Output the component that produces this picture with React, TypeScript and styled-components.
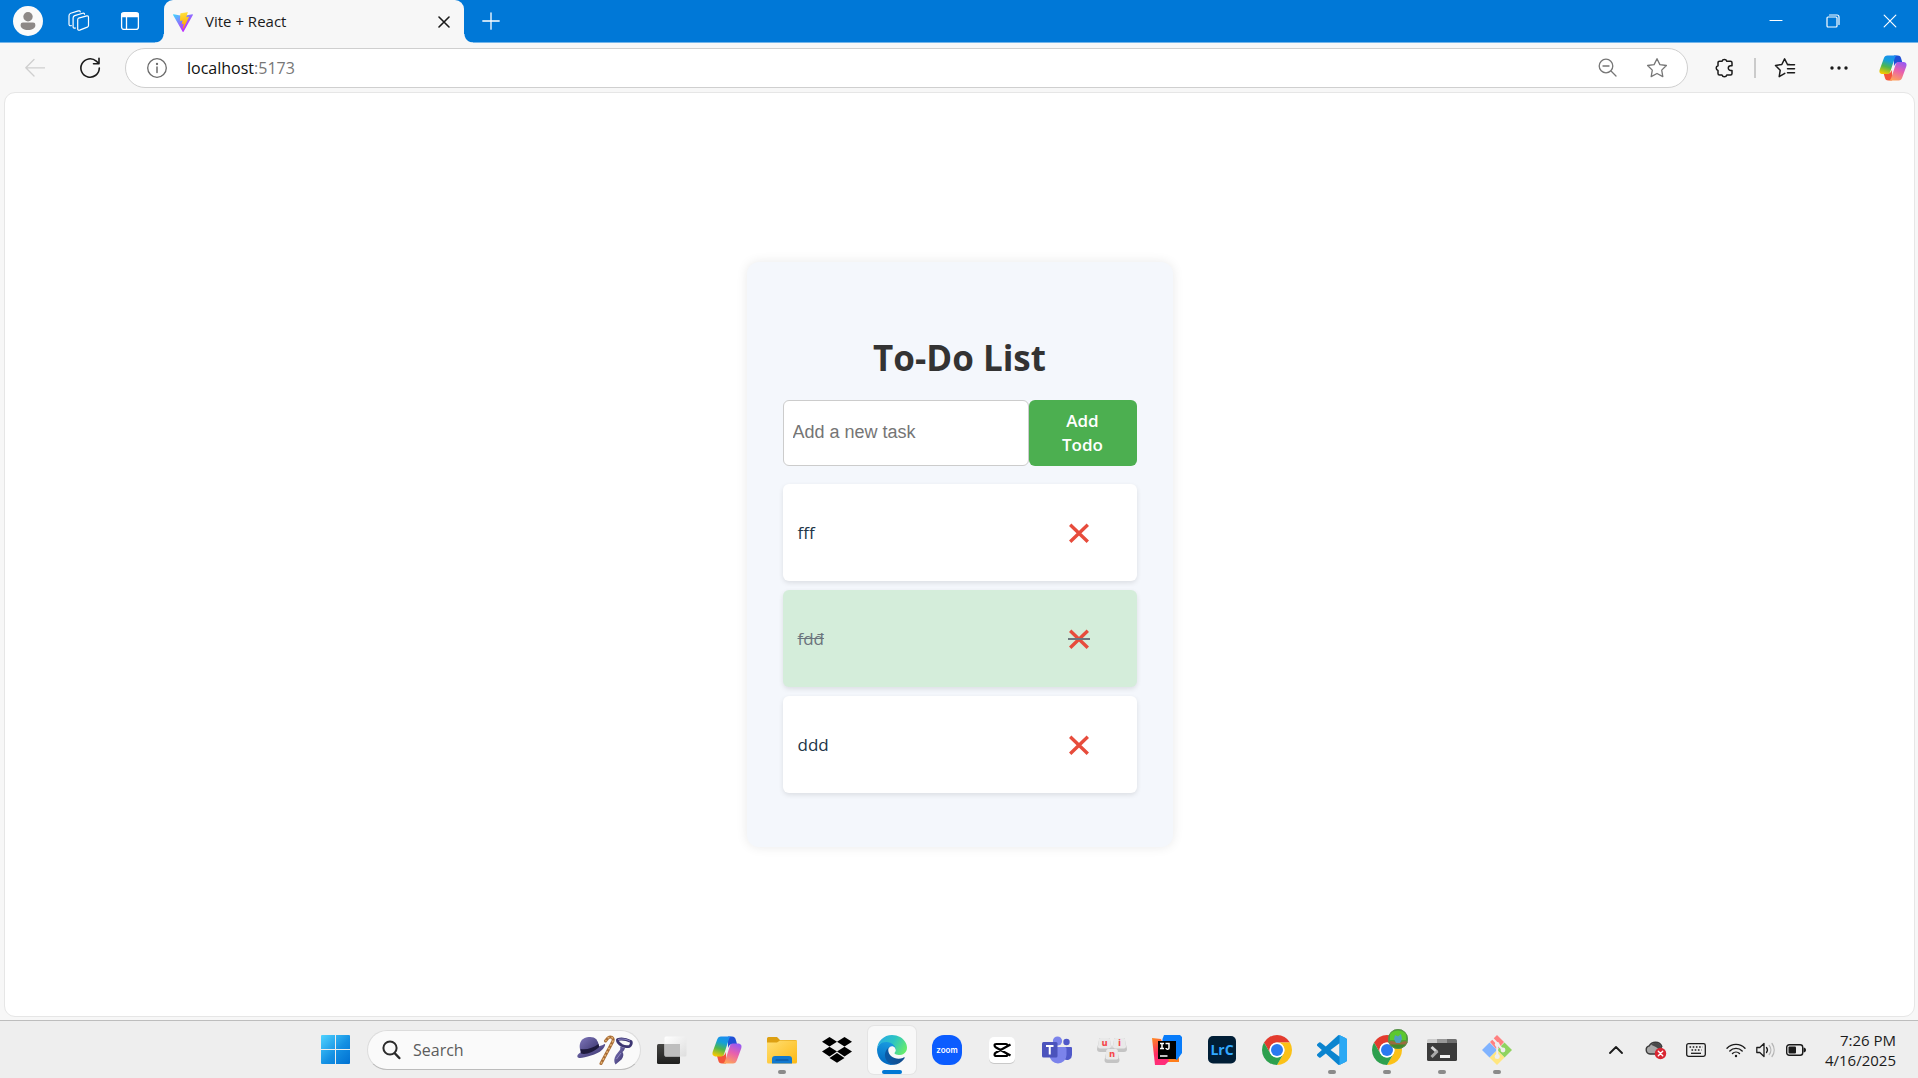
import React, { useState } from "react";
import styled, { createGlobalStyle } from "styled-components";

const ui = `"Segoe UI", "Open Sans", "Noto Sans", sans-serif`;

const GlobalStyle = createGlobalStyle`
  * { box-sizing: border-box; }
  body { margin: 0; font-family: ${ui}; background: #f7f7f7; }
  button { border: 0; padding: 0; background: none; font-family: inherit; cursor: pointer; }
  input { font-family: inherit; }
  svg { display: block; flex: none; }
`;

const Screen = styled.div`
  min-height: 100vh;
  display: flex;
  flex-direction: column;
`;

/* ---------- Title bar ---------- */

const TitleBar = styled.header`
  height: 43px;
  display: flex;
  background: #0078d7;
  border-bottom: 1px solid #73b5ea;
`;

const TitleTools = styled.div`
  display: flex;
  align-items: center;
  gap: 21px;
  padding: 0 19px 0 13px;
`;

const TitleButton = styled.button<{ $width?: number }>`
  width: ${(p) => p.$width ?? 30}px;
  height: 42px;
  display: grid;
  place-items: center;
  color: #fff;
`;

const Tab = styled.div`
  position: relative;
  width: 300px;
  height: 43px;
  display: flex;
  align-items: center;
  gap: 12px;
  padding: 0 10px 0 9px;
  border-radius: 9px 9px 0 0;
  background: #f7f7f7;
  font-size: 15px;
  color: #1b1b1b;

  &::before,
  &::after {
    content: "";
    position: absolute;
    bottom: 0;
    width: 9px;
    height: 9px;
  }
  &::before {
    left: -9px;
    background: radial-gradient(circle at 0 0, transparent 8px, #f7f7f7 9px);
  }
  &::after {
    right: -9px;
    background: radial-gradient(circle at 100% 0, transparent 8px, #f7f7f7 9px);
  }
`;

const TabTitle = styled.span`
  flex: 1;
  line-height: 20px;
  padding-bottom: 2px;
`;

const TabClose = styled.button`
  width: 20px;
  height: 20px;
  display: grid;
  place-items: center;
  color: #1b1b1b;
`;

const WindowControls = styled.div`
  display: flex;
  margin-left: auto;
`;

/* ---------- Toolbar ---------- */

const Toolbar = styled.nav`
  display: flex;
  align-items: center;
  height: 49px;
  padding: 0 10px 0 20px;
  color: #1b1b1b;
`;

const ToolButton = styled.button<{ $width?: number; $color?: string }>`
  width: ${(p) => p.$width ?? 30}px;
  height: 30px;
  display: grid;
  place-items: center;
  color: ${(p) => p.$color ?? "#1b1b1b"};
`;

const NavButtons = styled.div`
  display: flex;
  gap: 25px;
  padding-right: 20px;
`;

const AddressBar = styled.div`
  flex: 1;
  height: 40px;
  display: flex;
  align-items: center;
  border: 1px solid #cfcfcf;
  border-radius: 20px;
  background: #fff;
  padding: 0 15px 0 16px;
`;

const AddressText = styled.label`
  flex: 1;
  display: flex;
  align-items: center;
  padding-left: 15px;
  font-size: 16px;
  line-height: 24px;
  color: #777;
`;

const AddressInput = styled.input`
  field-sizing: content;
  border: 0;
  padding: 0;
  outline: 0;
  background: none;
  font-size: 16px;
  line-height: 24px;
  color: #111;
`;

const AddressTools = styled.div`
  display: flex;
  gap: 20px;
`;

const ToolbarTools = styled.div`
  display: flex;
  align-items: center;
  padding-left: 22px;
`;

const Divider = styled.span`
  width: 2px;
  height: 20px;
  margin: 0 14px;
  background: #cbcbcb;
`;

const DotsSlot = styled.div`
  display: flex;
  gap: 24px;
  margin-left: 24px;
`;

/* ---------- Page ---------- */

const PageFrame = styled.main`
  flex: 1;
  display: flex;
  align-items: center;
  justify-content: center;
  margin: 0 3px 3px 4px;
  border: 1px solid #e6e6e6;
  border-radius: 11px;
  background: #fff;
`;

const Card = styled.section`
  width: 426px;
  padding: 76px 36px 54px;
  border-radius: 12px;
  background: #f4f7fc;
  box-shadow: 0 0 12px rgba(0, 0, 0, 0.09);
`;

const Heading = styled.h1`
  margin: 0 0 22px;
  font-size: 35px;
  line-height: 40px;
  font-weight: 700;
  text-align: center;
  color: #333;
`;

const TodoForm = styled.form`
  display: flex;
  margin-bottom: 18px;
`;

const TodoInput = styled.input`
  flex: 1;
  min-width: 0;
  padding: 0 9px 2px;
  border: 1px solid #ccc;
  border-radius: 6px;
  background: #fff;
  font-family: Arial, "Liberation Sans", sans-serif;
  font-size: 18px;
  outline: 0;
  &::placeholder { color: #757575; }
`;

const AddButton = styled.button`
  width: 108px;
  padding: 9px 27px;
  border-radius: 6px;
  background: #4caf50;
  color: #fff;
  font-size: 17px;
  line-height: 24px;
  font-weight: 600;
`;

const TodoList = styled.ul`
  display: flex;
  flex-direction: column;
  gap: 9px;
  margin: 0;
  padding: 0;
  list-style: none;
`;

const TodoItem = styled.li<{ $done: boolean }>`
  display: flex;
  align-items: center;
  justify-content: space-between;
  height: 97px;
  padding: 0 14px 0 15px;
  border-radius: 6px;
  background: ${(p) => (p.$done ? "#d4edda" : "#fff")};
  color: ${(p) => (p.$done ? "#6c757d" : "#213547")};
  box-shadow: 0 2px 5px rgba(0, 0, 0, 0.1);
  font-size: 17px;
  line-height: 24px;
`;

const TodoText = styled.span<{ $done: boolean }>`
  text-decoration: ${(p) => (p.$done ? "line-through" : "none")};
`;

const DeleteButton = styled.button<{ $done: boolean }>`
  position: relative;
  width: 88px;
  height: 40px;
  display: grid;
  place-items: center;
  color: #e74c3c;

  &::after {
    content: "";
    position: absolute;
    left: 33px;
    right: 33px;
    top: 19px;
    height: 2px;
    background: ${(p) => (p.$done ? "#6c757d" : "transparent")};
  }
`;

/* ---------- Taskbar ---------- */

const Taskbar = styled.footer`
  display: flex;
  align-items: center;
  height: 58px;
  border-top: 1px solid #bdbdbd;
  background: #eeeeee;
`;

const Spacer = styled.div<{ $grow: number }>`
  flex: ${(p) => p.$grow} 1 0;
`;

const AppRow = styled.div`
  display: flex;
  align-items: center;
  gap: 7px;
`;

const AppButton = styled.button<{ $state?: "open" | "active" }>`
  position: relative;
  width: 48px;
  height: 48px;
  display: grid;
  place-items: center;
  border-radius: 6px;
  background: ${(p) => (p.$state === "active" ? "#f8f8f8" : "transparent")};
  box-shadow: ${(p) => (p.$state === "active" ? "0 0 0 1px #e4e4e4" : "none")};

  &::after {
    content: "";
    position: absolute;
    bottom: 0;
    left: 50%;
    width: ${(p) => (p.$state === "active" ? 20 : p.$state ? 8 : 0)}px;
    height: 4px;
    border-radius: 2px;
    transform: translateX(-50%);
    background: ${(p) => (p.$state === "active" ? "#0078d4" : "#8a8a8a")};
  }
`;

const SearchBox = styled.label`
  width: 274px;
  height: 40px;
  display: flex;
  align-items: center;
  gap: 12px;
  margin-left: 1px;
  padding: 0 7px 0 14px;
  border: 1px solid #dcdcdc;
  border-bottom-color: #bcbcbc;
  border-radius: 20px;
  background: #fafafa;
`;

const SearchInput = styled.input`
  flex: 1;
  min-width: 0;
  padding: 0;
  border: 0;
  outline: 0;
  background: none;
  font-size: 16px;
  line-height: 24px;
  &::placeholder { color: #5c5c5c; }
`;

const Tray = styled.div`
  display: flex;
  align-items: center;
  gap: 10px;
  padding-right: 22px;
`;

const TrayButton = styled.button`
  width: 30px;
  height: 40px;
  display: grid;
  place-items: center;
`;

const TrayGroup = styled.div`
  display: flex;
`;

const Clock = styled.time`
  min-width: 75px;
  text-align: right;
  font-size: 15px;
  line-height: 20px;
  color: #1b1b1b;
  white-space: nowrap;
`;

/* ---------- Icons ---------- */

const line = { fill: "none", stroke: "currentColor", strokeLinecap: "round", strokeLinejoin: "round" } as const;

const AvatarIcon = () => (
  <svg width="30" height="30" viewBox="0 0 30 30">
    <circle cx="15" cy="15" r="15" fill="#fafafa" />
    <circle cx="15" cy="10.7" r="4.7" fill="#8d8886" />
    <path d="M10 16.5h10a2.4 2.4 0 0 1 2.4 2.4c0 3.2-3.2 5-7.4 5s-7.4-1.800-7.400-5a2.400 2.400 0 0 1 2.400-2.400z" fill="#8d8886" />
  </svg>
);

const WorkspacesIcon = () => (
  <svg width="22" height="22" viewBox="0 0 22 22" {...line} strokeWidth="1.200">
    <path d="M10.500 8.200l8.300-2.300c1-.2 1.700.3 1.700 1.300v8.200c0 .8-.5 1.400-1.200 1.700l-7.600 3c-1.100.4-2-.1-2-1.200v-9c0-.8.300-1.500.800-1.700z" />
    <path d="M7.500 18c-1.500.5-2.400 0-2.400-1.300V8c0-1.200.5-2 1.600-2.400l8-2.400c1-.3 1.800.1 1.800 1" />
    <path d="M3.300 15.600C1.900 16 1 15.400 1 14.200V5.800C1 4.600 1.600 3.700 2.700 3.300l7.600-2.400c1-.3 1.800 0 1.900.9" />
  </svg>
);

const VerticalTabsIcon = () => (
  <svg width="20" height="20" viewBox="0 0 20 20" {...line} strokeWidth="1.300">
    <rect x="1.600" y="1.600" width="16.800" height="16.800" rx="2.500" />
    <path d="M2 2.500h16v3.200H2z" fill="currentColor" />
    <path d="M6.500 6v12" />
  </svg>
);

const ViteIcon = () => (
  <svg width="20" height="20" viewBox="0 0 256 257">
    <defs>
      <linearGradient id="viteA" x1="-.8%" x2="57.600%" y1="7.700%" y2="78.400%">
        <stop offset="0" stopColor="#41D1FF" />
        <stop offset="1" stopColor="#BD34FE" />
      </linearGradient>
      <linearGradient id="viteB" x1="43.400%" x2="50.300%" y1="2.200%" y2="89%">
        <stop offset="0" stopColor="#FFEA83" />
        <stop offset=".08" stopColor="#FFDD35" />
        <stop offset="1" stopColor="#FFA800" />
      </linearGradient>
    </defs>
    <path fill="url(#viteA)" d="M255.153 37.938L134.897 252.976c-2.483 4.440-8.862 4.466-11.382.048L.875 37.958c-2.746-4.814 1.371-10.646 6.827-9.670l120.385 21.517a6.537 6.537 0 0 0 2.322-.004l117.867-21.483c5.438-.991 9.574 4.796 6.877 9.620Z" />
    <path fill="url(#viteB)" d="M185.432.063L96.440 17.501a3.268 3.268 0 0 0-2.634 3.014l-5.474 92.456a3.268 3.268 0 0 0 3.997 3.378l24.777-5.718c2.318-.535 4.413 1.507 3.936 3.838l-7.361 36.047c-.495 2.426 1.782 4.500 4.151 3.780l15.304-4.649c2.372-.720 4.652 1.360 4.150 3.788l-11.698 56.621c-.732 3.542 3.979 5.473 5.943 2.437l1.313-2.028l72.516-144.720c1.215-2.423-.880-5.186-3.540-4.672l-25.505 4.922c-2.396.462-4.435-1.770-3.759-4.114l16.646-57.705c.677-2.350-1.370-4.583-3.769-4.113Z" />
  </svg>
);

const CloseIcon = ({ size = 12, weight = 1.6 }: { size?: number; weight?: number }) => (
  <svg width={size} height={size} viewBox="0 0 12 12" {...line} strokeWidth={weight}>
    <path d="M1 1l10 10M11 1L1 11" />
  </svg>
);

const PlusIcon = () => (
  <svg width="18" height="18" viewBox="0 0 18 18" {...line} strokeWidth="1.300">
    <path d="M9 .8v16.400M.8 9h16.400" />
  </svg>
);

const MinimizeIcon = () => (
  <svg width="14" height="14" viewBox="0 0 14 14" {...line} strokeWidth="1.200">
    <path d="M1 6.500h12" />
  </svg>
);

const RestoreIcon = () => (
  <svg width="14" height="14" viewBox="0 0 14 14" {...line} strokeWidth="1.200">
    <rect x="1" y="3" width="10" height="10" rx="1" />
    <path d="M3.500 1h7.500a2 2 0 0 1 2 2v7.500" />
  </svg>
);

const BackIcon = () => (
  <svg width="20" height="20" viewBox="0 0 20 20" {...line} strokeWidth="1.300">
    <path d="M9 1.500L.8 9.800L9 18M1 9.800h18.500" />
  </svg>
);

const RefreshIcon = () => (
  <svg width="22" height="22" viewBox="0 0 22 22" {...line} strokeWidth="1.600">
    <path d="M20.300 11a9.200 9.200 0 1 1-3-6.800l2.500 2.300M20 1.300v5.500h-5.500" />
  </svg>
);

const InfoIcon = () => (
  <svg width="22" height="22" viewBox="0 0 22 22" {...line} strokeWidth="1.300">
    <circle cx="11" cy="11" r="9.300" />
    <path d="M11 10v5.500" strokeWidth="1.500" />
    <circle cx="11" cy="7" r=".5" fill="currentColor" />
  </svg>
);

const ZoomOutIcon = () => (
  <svg width="19" height="19" viewBox="0 0 19 19" {...line} strokeWidth="1.300">
    <circle cx="8" cy="8" r="6.800" />
    <path d="M13 13l5 5M5 8h6" />
  </svg>
);

const StarIcon = () => (
  <svg width="22" height="22" viewBox="0 0 22 22" {...line} strokeWidth="1.300">
    <path d="M11 1.700l2.900 5.900 6.500.9-4.700 4.600 1.100 6.500L11 16.500l-5.800 3.100 1.100-6.500L1.600 8.500l6.500-.9z" />
  </svg>
);

const PuzzleIcon = () => (
  <svg width="22" height="22" viewBox="0 0 22 22" {...line} strokeWidth="1.500">
    <path d="M8 4.200a2.500 2.500 0 0 1 4.800 0h3.700a1.500 1.500 0 0 1 1.500 1.500v3h-1.300a2.400 2.400 0 0 0 0 4.800H18v3a1.500 1.500 0 0 1-1.500 1.500h-3.700a2.500 2.500 0 0 1-4.800 0H5.500A1.500 1.500 0 0 1 4 16.500v-3a2.500 2.500 0 0 1 0-4.800v-3a1.500 1.500 0 0 1 1.500-1.500z" />
  </svg>
);

const FavoritesIcon = () => (
  <svg width="22" height="22" viewBox="0 0 22 22" {...line} strokeWidth="1.500">
    <path d="M10.800 16.300L5.200 19.600l1-6.300L1.500 8.500l6.300-1L10.600 1.800l2.900 5.700h2M13.500 7.700h7M13.500 11.700h7M13.500 15.700h7" />
  </svg>
);

const DotsIcon = () => (
  <svg width="18" height="4" viewBox="0 0 18 4" fill="currentColor">
    <circle cx="2" cy="2" r="1.700" />
    <circle cx="9" cy="2" r="1.700" />
    <circle cx="16" cy="2" r="1.700" />
  </svg>
);

const CopilotIcon = ({ size = 30 }: { size?: number }) => (
  <svg width={size} height={size} viewBox="0 -1.500 30 30">
    <defs>
      <linearGradient id="coA" x1=".6" y1="0" x2=".3" y2="1">
        <stop offset="0" stopColor="#1b8df0" />
        <stop offset=".3" stopColor="#14a0d8" />
        <stop offset=".62" stopColor="#4fb74c" />
        <stop offset="1" stopColor="#f6c800" />
      </linearGradient>
      <linearGradient id="coB" x1=".7" y1="0" x2=".3" y2="1">
        <stop offset="0" stopColor="#9a5af0" />
        <stop offset=".45" stopColor="#e85fae" />
        <stop offset="1" stopColor="#ffa458" />
      </linearGradient>
    </defs>
    <path fill="#1f4fd6" d="M16 0h4c2.300 0 3.300 1 4 4l1 3.500h-4c-3 0-4 1.500-5 4z" />
    <path fill="#f4553a" d="M14 27h-4c-2.300 0-3.300-1-4-4l-1-3.500h4c3 0 4-1.500 5-4z" />
    <path fill="url(#coA)" d="M9 0h11c-2 0-2.700 1.500-3.500 4L12 17.800c-.7 2-2 2.200-4 2.200H4.500C.5 20 0 17.500.8 15L5 3.500C5.800 1 7 0 9 0z" />
    <path fill="url(#coB)" d="M21 27H10c2 0 2.700-1.500 3.500-4L18 9.200c.7-2 2-2.200 4-2.200h3.500c4 0 4.500 2.500 3.700 5L25 23.500c-.8 2.500-2 3.500-4 3.500z" />
  </svg>
);

const WindowsIcon = () => (
  <svg width="29" height="29" viewBox="0 0 29 29">
    <defs>
      <linearGradient id="win" x1="0" y1="0" x2="1" y2="1">
        <stop offset="0" stopColor="#4fd3ff" />
        <stop offset=".55" stopColor="#1490e3" />
        <stop offset="1" stopColor="#0070d1" />
      </linearGradient>
    </defs>
    <path fill="url(#win)" d="M1 0h13v14H0V1a1 1 0 0 1 1-1zM15 0h13a1 1 0 0 1 1 1v13H15zM0 15h14v14H1a1 1 0 0 1-1-1zM15 15h14v13a1 1 0 0 1-1 1H15z" />
  </svg>
);

const SearchIcon = () => (
  <svg width="19" height="20" viewBox="0 0 19 20" fill="none" stroke="#2b2b2b" strokeLinecap="round">
    <circle cx="8" cy="8" r="6.600" strokeWidth="2" />
    <path d="M13 13.500l4.300 4.500" strokeWidth="2.500" />
  </svg>
);

const HatIcon = () => (
  <svg width="56" height="30" viewBox="0 0 56 30">
    <defs>
      <linearGradient id="hat" x1="0" y1="0" x2="1" y2="1">
        <stop offset="0" stopColor="#8078bb" />
        <stop offset="1" stopColor="#352f68" />
      </linearGradient>
    </defs>
    <path fill="url(#hat)" d="M.5 22c-1-3 4-5 6-6L26 10c1.500-1.500 2.500-1 2 .5-2 5-7 8-14 10S2 24 .5 22z" />
    <path fill="url(#hat)" d="M4 18C1 10 3 4 10 2.300 17 .7 21 4 22 11c-4 5-12 8-18 7z" />
    <path fill="#1e1a3d" d="M3.500 14c6 1 13-1 18-5l.7 3C17 17 9 20 4 18.500z" />
    <path d="M24 28.500L35.500 7C38 2.500 33 .5 30.500 3.500L28.500 6" fill="none" stroke="#a86c35" strokeWidth="3" strokeLinecap="round" />
    <path d="M24 28.500L35.500 7C38 2.500 33 .5 30.500 3.500L28.500 6" fill="none" stroke="#e3b375" strokeWidth="1.500" strokeDasharray="2 2" />
    <path fill="none" stroke="#3d3773" strokeWidth="2.800" strokeLinejoin="round" d="M40.500 4.500c4-1 9.500 0 13.500 2 .8 1.500 0 4-1.500 4.800-3 .7-5.500.2-7.500-.8C42.500 9 40 7 40.500 4.500z" />
    <path fill="url(#hat)" d="M43 11.500l5 1.500c-.5 2-1.500 3-2.500 4 1.500 2 1 5-1 7.500L38.500 29.500c-2-3-1.500-6 .5-9.500l3.500-4.500c1-1 1-2.500.5-4z" />
    <path fill="none" stroke="#8f88c7" strokeWidth="1" d="M41 4.500c4-1 8-.5 12 1.500M39.500 24l4.500-6" />
  </svg>
);

const TaskViewIcon = () => (
  <svg width="30" height="30" viewBox="0 0 30 30">
    <defs>
      <linearGradient id="tvA" x1="0" y1="0" x2="0" y2="1"><stop offset="0" stopColor="#454543" /><stop offset="1" stopColor="#1f1f1e" /></linearGradient>
      <linearGradient id="tvB" x1="0" y1="0" x2="1" y2="1"><stop offset="0" stopColor="#fff" /><stop offset="1" stopColor="#dedede" /></linearGradient>
    </defs>
    <rect x="0" y="9" width="23" height="20" rx="1.500" fill="url(#tvA)" />
    <rect x="7.500" y="1.500" width="22" height="20" rx="1.500" fill="url(#tvB)" />
    <path fill="#bebebe" d="M7.500 9H23v12.500H9A1.500 1.500 0 0 1 7.500 20z" />
  </svg>
);

const FolderIcon = () => (
  <svg width="30" height="28" viewBox="0 0 30 28">
    <defs>
      <linearGradient id="fo" x1="0" y1="0" x2="1" y2="1"><stop offset="0" stopColor="#ffdf74" /><stop offset="1" stopColor="#fdb913" /></linearGradient>
    </defs>
    <path fill="#dda012" d="M1.500 1H10l3 3h15.500A1.500 1.500 0 0 1 30 5.500V8H0V2.500A1.500 1.500 0 0 1 1.500 1z" />
    <path fill="url(#fo)" d="M0 6.500h10l3-2h16a1 1 0 0 1 1 1v20.500a1.500 1.500 0 0 1-1.500 1.500h-27A1.500 1.500 0 0 1 0 26z" />
    <path fill="#1279cf" d="M5 27.500V23a3 3 0 0 1 3-3h14a3 3 0 0 1 3 3v4.500z" />
    <path d="M9 24h12" stroke="#0b4f94" strokeWidth="1.200" strokeLinecap="round" />
  </svg>
);

const DropboxIcon = () => (
  <svg width="30" height="26" viewBox="0 0 30 26">
    <path d="M7.500 0L15 4.800 7.500 9.600 0 4.800zM22.500 0L30 4.800l-7.500 4.800L15 4.800zM7.500 9.800L15 14.600l-7.500 4.800L0 14.600zM22.500 9.800L30 14.600l-7.500 4.800L15 14.600zM15 16l7.500 4.900L15 25.700l-7.500-4.800z" />
  </svg>
);

const EdgeIcon = () => (
  <svg width="30" height="30" viewBox="0 0 256 256">
    <defs>
      <linearGradient id="edA" x1=".2" y1=".5" x2="1" y2=".5"><stop offset="0" stopColor="#0c59a4" /><stop offset="1" stopColor="#114a8b" /></linearGradient>
      <linearGradient id="edB" x1=".6" y1="0" x2=".4" y2="1"><stop offset="0" stopColor="#1b9de2" /><stop offset="1" stopColor="#0067c0" /></linearGradient>
      <linearGradient id="edC" x1="0" y1=".2" x2="1" y2=".6"><stop offset="0" stopColor="#2aa9e6" /><stop offset=".5" stopColor="#2bc3c4" /><stop offset="1" stopColor="#66eb6e" /></linearGradient>
    </defs>
    <path fill="url(#edA)" d="M231 190.500c-3.400 1.800-6.900 3.400-10.500 4.700a101.500 101.500 0 0 1-35.900 6.500c-47.300 0-88.500-32.500-88.500-74.300 0-11.500 6.400-21.900 16.400-27.300-42.800 1.800-53.800 46.400-53.800 72.500 0 74 68.100 81.400 82.800 81.400 7.900 0 19.800-2.300 27-4.600l1.300-.4a128.300 128.300 0 0 0 66.600-52.800 4 4 0 0 0-5.300-5.700z" />
    <path fill="url(#edB)" d="M105.700 241.400a79.200 79.200 0 0 1-22.700-21.300 80.700 80.700 0 0 1 29.500-120c3.200-1.500 8.500-4.100 15.600-4 10.100.1 19.600 4.900 25.700 13 4 5.400 6.300 11.900 6.400 18.700 0-.2 24.500-79.600-80-79.600-43.900 0-80 41.700-80 78.200a130.200 130.200 0 0 0 12.100 56 128 128 0 0 0 156.400 67.100 75.500 75.500 0 0 1-62.800-8z" />
    <path fill="url(#edC)" d="M152.300 148.900c-.8 1-3.300 2.500-3.300 5.700 0 2.600 1.700 5.100 4.700 7.200 14.400 10 41.500 8.700 41.600 8.700a59.600 59.600 0 0 0 30.300-8.300 61.400 61.400 0 0 0 30.400-52.900c.3-22.400-8-37.300-11.300-43.900C223.500 23.900 177.700 0 128 0A128 128 0 0 0 0 126.200c.5-36.500 36.800-66 80-66 3.500 0 23.500.3 42 10.100 16.300 8.600 24.900 19 30.800 29.300 6.200 10.700 7.300 24.100 7.300 29.500s-2.700 13.300-7.800 19.800z" />
  </svg>
);

const ZoomIcon = () => (
  <svg width="30" height="30" viewBox="0 0 30 30">
    <rect width="30" height="30" rx="12" fill="#0b5cff" />
    <text x="15" y="17.500" textAnchor="middle" fontFamily="Inter, sans-serif" fontSize="8" fontWeight="600" fill="#fff">zoom</text>
  </svg>
);

const CapCutIcon = () => (
  <svg width="28" height="28" viewBox="0 0 28 28">
    <rect x="1" y="2" width="26" height="26" rx="5" fill="#c9c9c9" />
    <rect x="1" y="1" width="26" height="26" rx="5" fill="#fff" />
    <path d="M22.500 8.500L8 16.500c-2 1-2 3.500.3 3.500h9.500c1.500 0 1.700-.6 1.700-1.800M22.500 19.500L8 11.500C6 10.500 6 8 8.300 8h9.500c1.500 0 1.700.6 1.700 1.800" fill="none" stroke="#000" strokeWidth="2.200" strokeLinejoin="round" />
  </svg>
);

const TeamsIcon = () => (
  <svg width="30" height="28" viewBox="0 0 30 28">
    <circle cx="24.500" cy="6" r="3.200" fill="#5059c9" />
    <path fill="#5059c9" d="M19 11h10a1 1 0 0 1 1 1v7a5 5 0 0 1-8 4z" />
    <circle cx="15.500" cy="5" r="4.600" fill="#7b83eb" />
    <path fill="#7b83eb" d="M9 11h14a1.500 1.500 0 0 1 1.500 1.500V19a8.500 8.500 0 0 1-17 0z" />
    <rect x="0" y="6" width="15.500" height="15.500" rx="1.500" fill="#4b53bc" />
    <path d="M4 10h7.500M7.750 10v8.500" stroke="#fff" strokeWidth="2" />
  </svg>
);

const UniKeyIcon = () => (
  <svg width="30" height="28" viewBox="0 0 30 28">
    {[[0, 2, "u"], [15, 2, "i"], [7.5, 13, "n"]].map(([x, y, t]) => (
      <g key={t as string} transform={`translate(${x} ${y})`}>
        <path d="M2.500 0h10l2.500 11q0 3-3 3h-9q-3 0-3-3z" fill="#c4c4c4" />
        <path d="M3.500 0h8q1.500 0 1.700 1.500l.8 7q0 2-2 2H3q-2 0-2-2l.8-7Q2 0 3.500 0z" fill="#e9e9e9" />
        <text x="7.500" y="7.500" textAnchor="middle" fontFamily="Inter, sans-serif" fontSize="9" fontWeight="800" fill="#f5484c">{t}</text>
      </g>
    ))}
  </svg>
);

const IntelliJIcon = () => (
  <svg width="30" height="30" viewBox="0 0 30 30">
    <defs>
      <linearGradient id="ij" x1="0" y1="0" x2=".3" y2="1"><stop offset="0" stopColor="#ff8a1e" /><stop offset=".6" stopColor="#ff2d63" /><stop offset="1" stopColor="#ff2d7a" /></linearGradient>
    </defs>
    <path fill="#ff7d1a" d="M16 14h11v13H16z" />
    <path fill="url(#ij)" d="M0 3l9 1 8 22-4 4H3z" />
    <path fill="#087cfa" d="M12 0h16l2 2v16l-5 7-15-8 .5-13z" />
    <path d="M6 6h18v18H6z" />
    <path d="M8 8.500h4M10 8.500v5M8 13.500h4M13.500 8.500h3.500v4a1.500 1.500 0 0 1-3 .500M8 21h7.500" fill="none" stroke="#fff" strokeWidth="1.500" />
  </svg>
);

const LightroomIcon = () => (
  <svg width="28" height="28" viewBox="0 0 28 28">
    <rect width="28" height="27.500" rx="5" fill="#001e36" />
    <text x="14" y="19" textAnchor="middle" fontFamily="Open Sans, sans-serif" fontSize="14" fontWeight="700" fill="#31a8ff">LrC</text>
  </svg>
);

const ChromeShapes = () => (
  <>
    <path fill="#e33b2e" d="M24 13h19.050A22 22 0 0 0 4.950 13l9.520 16.500A11 11 0 0 1 24 13z" />
    <path fill="#fbc116" d="M43.050 13A22 22 0 0 1 24 46l9.530-16.500A11 11 0 0 0 24 13z" />
    <path fill="#2da04e" d="M24 46A22 22 0 0 1 4.950 13l9.520 16.500a11 11 0 0 0 19.060 0z" />
    <circle cx="24" cy="24" r="11" fill="#fff" />
    <circle cx="24" cy="24" r="8.800" fill="#2a7af0" />
  </>
);

const ChromeIcon = () => (
  <svg width="30" height="30" viewBox="2 2 44 44"><ChromeShapes /></svg>
);

const ChromeProfileIcon = () => (
  <svg width="42" height="42" viewBox="0 0 42 42">
    <svg x="6" y="6" width="30" height="30" viewBox="2 2 44 44"><ChromeShapes /></svg>
    <clipPath id="badge"><circle cx="32" cy="10" r="10" /></clipPath>
    <g clipPath="url(#badge)">
      <path fill="#4da13a" d="M22 0h20v20H22z" />
      <path fill="#5cc82f" d="M24 4q8-5 16 0v7H24z" />
      <path fill="#9c6a3e" d="M22 13q4-2 7 0l6 .5q4-2 7-.5v3H22z" />
      <path fill="#3f8a2b" d="M22 15.500h20V20H22z" />
      <path fill="#4f9fc0" d="M29 6l3 1.500L35 5l1 5-2 4h-4l-2-4z" />
    </g>
    <circle cx="32" cy="10" r="9.600" fill="none" stroke="#5d8f4e" strokeWidth=".8" />
  </svg>
);

const VSCodeIcon = () => (
  <svg width="30" height="30" viewBox="0 0 24 24">
    <path fill="#0a84cf" d="M23.150 2.587L18.210.210a1.494 1.494 0 0 0-1.705.290l-9.460 8.630-4.120-3.128a.999.999 0 0 0-1.276.057L.327 7.261A1 1 0 0 0 .326 8.740L3.899 12 .326 15.260a1 1 0 0 0 .001 1.479L1.650 17.940a.999.999 0 0 0 1.276.057l4.120-3.128 9.460 8.630a1.492 1.492 0 0 0 1.704.290l4.942-2.377A1.500 1.500 0 0 0 24 20.060V3.939a1.500 1.500 0 0 0-.850-1.352zm-5.146 14.861L10.826 12l7.178-5.448v10.896z" />
    <path fill="#2ba9f4" d="M23.150 2.587L18.210.210a1.494 1.494 0 0 0-1.200-.05c.6.1 1 .6 1 1.300v21.080c0 .7-.4 1.200-1 1.300a1.490 1.490 0 0 0 1.200-.05l4.942-2.377A1.500 1.500 0 0 0 24 20.060V3.939a1.500 1.500 0 0 0-.850-1.352z" />
  </svg>
);

const TerminalIcon = () => (
  <svg width="30" height="22" viewBox="0 0 30 22">
    <path fill="#3b3b3b" d="M0 3h30v17.500a1.500 1.500 0 0 1-1.500 1.500h-27A1.500 1.500 0 0 1 0 20.500z" />
    <path fill="#cccccc" d="M1.500 0H10v4H0V1.500A1.500 1.500 0 0 1 1.500 0z" />
    <path fill="#999" d="M10 0h10v4H10z" />
    <path fill="#6f6f6f" d="M20 0h8.500A1.500 1.500 0 0 1 30 1.500V4H20z" />
    <path d="M4.500 8l5.500 5" stroke="#d8d8d8" strokeWidth="3" />
    <path d="M10.500 12L4.500 18" stroke="#a9a9a9" strokeWidth="3" />
    <path d="M13 17.500h10" stroke="#f2f2f2" strokeWidth="3" />
  </svg>
);

const GitIcon = () => (
  <svg width="30" height="30" viewBox="0 0 30 30">
    <path fill="#ff8080" d="M15 0l7 7-7 8-7-8z" />
    <path fill="#8fd35f" d="M22.500 7.500l7.500 7.500-7.500 7.500L15 15z" />
    <path fill="#ffe680" d="M15 15l7.500 7.500L15 30l-7.500-7.500z" />
    <path fill="#80b3ff" d="M7.500 7.500L15 15l-7.500 7.500L0 15z" />
    <path d="M10.500 3.500l4.700 5V21M15.200 8.500l5.800 6.500" stroke="#eee" strokeWidth="2" fill="none" />
    <circle cx="15.200" cy="9.500" r="2.400" fill="#eee" />
    <circle cx="15.200" cy="21.500" r="2.500" fill="#eee" />
    <circle cx="21" cy="15" r="2.400" fill="#eee" />
  </svg>
);

const ChevronUpIcon = () => (
  <svg width="14" height="8" viewBox="0 0 14 8" fill="none" stroke="#1b1b1b" strokeWidth="1.800" strokeLinecap="round" strokeLinejoin="round">
    <path d="M1 7l6-6 6 6" />
  </svg>
);

const CloudIcon = () => (
  <svg width="22" height="20" viewBox="0 0 22 20">
    <path d="M5 14a4.200 4.200 0 0 1-.8-8.200C5.500 3.500 8.300 2.200 10.500 2.200c3 0 5.500 1.800 6.300 4.300L12 14z" fill="#a8a8a8" stroke="#3a3a3a" strokeWidth="1.400" />
    <path d="M6 4.800C9 1.500 15.500 2 17 8l-3 2C12 7 9 6 6 4.800z" fill="#4a4a4a" />
    <circle cx="15.500" cy="13.500" r="5.700" fill="#d92632" />
    <path d="M13.300 11.300l4.400 4.400M17.700 11.300l-4.400 4.400" stroke="#fff" strokeWidth="1.400" strokeLinecap="round" />
  </svg>
);

const KeyboardIcon = () => (
  <svg width="20" height="14" viewBox="0 0 20 14" fill="none" stroke="#1b1b1b">
    <rect x=".7" y=".7" width="18.600" height="12.600" rx="1.800" strokeWidth="1.300" />
    <path d="M3.500 4h13M5.500 7h10" strokeWidth="1.600" strokeDasharray="1.600 1.600" />
    <path d="M5 10.300h10" strokeWidth="1.300" />
  </svg>
);

const WifiIcon = () => (
  <svg width="20" height="16" viewBox="0 0 20 16" fill="none" stroke="#1b1b1b" strokeWidth="1.400" strokeLinecap="round">
    <path d="M1 6.200a12.500 12.500 0 0 1 18 0M3.800 9a8.600 8.600 0 0 1 12.400 0M6.500 11.600a5 5 0 0 1 7 0" />
    <circle cx="10" cy="14" r="1.200" fill="#1b1b1b" stroke="none" />
  </svg>
);

const SpeakerIcon = () => (
  <svg width="20" height="16" viewBox="0 0 20 16" fill="none" stroke="#1b1b1b" strokeWidth="1.300" strokeLinecap="round" strokeLinejoin="round">
    <path d="M.8 5.500h3L8 1.500v13l-4.200-4h-3zM10.500 5.500a4 4 0 0 1 0 5" />
    <path d="M13.200 3.500a7 7 0 0 1 0 9M16 1.500a11 11 0 0 1 0 13" stroke="#b5b5b5" />
  </svg>
);

const BatteryIcon = () => (
  <svg width="20" height="12" viewBox="0 0 20 12">
    <rect x=".7" y=".7" width="16" height="10.600" rx="2.500" fill="none" stroke="#1b1b1b" strokeWidth="1.400" />
    <rect x="2.500" y="2.500" width="7.500" height="7" rx="1" fill="#1b1b1b" />
    <path d="M17.500 3.500c1.500 0 2.500 1 2.500 2.500s-1 2.500-2.500 2.500z" fill="#1b1b1b" />
  </svg>
);

const CrossIcon = () => (
  <svg width="20" height="20" viewBox="0 0 20 20" fill="none" stroke="currentColor" strokeWidth="3.400">
    <path d="M1.200 1.800l17.600 16.900M18.800 1.800L1.200 18.700" />
  </svg>
);

/* ---------- App ---------- */

type Todo = { id: number; text: string; done: boolean };

const initialTodos: Todo[] = [
  { id: 1, text: "fff", done: false },
  { id: 2, text: "fdđ", done: true },
  { id: 3, text: "ddd", done: false },
];

const apps: { name: string; icon: React.ReactNode; state?: "open" | "active" }[] = [
  { name: "Task view", icon: <TaskViewIcon /> },
  { name: "Copilot", icon: <CopilotIcon /> },
  { name: "File Explorer", icon: <FolderIcon />, state: "open" },
  { name: "Dropbox", icon: <DropboxIcon /> },
  { name: "Edge", icon: <EdgeIcon />, state: "active" },
  { name: "Zoom", icon: <ZoomIcon /> },
  { name: "CapCut", icon: <CapCutIcon /> },
  { name: "Teams", icon: <TeamsIcon /> },
  { name: "UniKey", icon: <UniKeyIcon /> },
  { name: "IntelliJ IDEA", icon: <IntelliJIcon /> },
  { name: "Lightroom Classic", icon: <LightroomIcon /> },
  { name: "Chrome", icon: <ChromeIcon /> },
  { name: "Visual Studio Code", icon: <VSCodeIcon />, state: "open" },
  { name: "Chrome profile", icon: <ChromeProfileIcon />, state: "open" },
  { name: "Terminal", icon: <TerminalIcon />, state: "open" },
  { name: "Git", icon: <GitIcon />, state: "open" },
];

function TodoApp() {
  const [todos, setTodos] = useState(initialTodos);
  const [text, setText] = useState("");

  const add = (e: React.FormEvent) => {
    e.preventDefault();
    if (!text.trim()) return;
    setTodos([...todos, { id: Date.now(), text: text.trim(), done: false }]);
    setText("");
  };
  const toggle = (id: number) => setTodos(todos.map((t) => (t.id === id ? { ...t, done: !t.done } : t)));
  const remove = (id: number) => setTodos(todos.filter((t) => t.id !== id));

  return (
    <Card>
      <Heading>To-Do List</Heading>
      <TodoForm onSubmit={add}>
        <TodoInput aria-label="New task" placeholder="Add a new task" value={text} onChange={(e) => setText(e.target.value)} />
        <AddButton type="submit">Add Todo</AddButton>
      </TodoForm>
      <TodoList>
        {todos.map((t) => (
          <TodoItem key={t.id} $done={t.done}>
            <TodoText $done={t.done} onClick={() => toggle(t.id)}>{t.text}</TodoText>
            <DeleteButton type="button" $done={t.done} aria-label={`Delete ${t.text}`} onClick={() => remove(t.id)}>
              <CrossIcon />
            </DeleteButton>
          </TodoItem>
        ))}
      </TodoList>
    </Card>
  );
}

export default function App() {
  return (
    <Screen>
      <GlobalStyle />
      <TitleBar>
        <TitleTools>
          <TitleButton aria-label="Profile"><AvatarIcon /></TitleButton>
          <TitleButton aria-label="Workspaces"><WorkspacesIcon /></TitleButton>
          <TitleButton aria-label="Tab actions"><VerticalTabsIcon /></TitleButton>
        </TitleTools>
        <Tab>
          <ViteIcon />
          <TabTitle>Vite + React</TabTitle>
          <TabClose aria-label="Close tab"><CloseIcon /></TabClose>
        </Tab>
        <TitleButton $width={54} aria-label="New tab"><PlusIcon /></TitleButton>
        <WindowControls>
          <TitleButton $width={57} aria-label="Minimize"><MinimizeIcon /></TitleButton>
          <TitleButton $width={57} aria-label="Restore"><RestoreIcon /></TitleButton>
          <TitleButton $width={57} aria-label="Close"><CloseIcon size={14} weight={1} /></TitleButton>
        </WindowControls>
      </TitleBar>
      <Toolbar>
        <NavButtons>
          <ToolButton aria-label="Back" $color="#cfcfcf"><BackIcon /></ToolButton>
          <ToolButton aria-label="Refresh"><RefreshIcon /></ToolButton>
        </NavButtons>
        <AddressBar>
          <ToolButton aria-label="Site information" $color="#6b6b6b"><InfoIcon /></ToolButton>
          <AddressText>
            <AddressInput aria-label="Address" defaultValue="localhost" />
            :5173
          </AddressText>
          <AddressTools>
            <ToolButton aria-label="Zoom out" $color="#767676"><ZoomOutIcon /></ToolButton>
            <ToolButton aria-label="Add to favorites" $color="#767676"><StarIcon /></ToolButton>
          </AddressTools>
        </AddressBar>
        <ToolbarTools>
          <ToolButton aria-label="Extensions"><PuzzleIcon /></ToolButton>
          <Divider />
          <ToolButton aria-label="Favorites"><FavoritesIcon /></ToolButton>
          <DotsSlot>
            <ToolButton aria-label="More"><DotsIcon /></ToolButton>
            <ToolButton aria-label="Copilot"><CopilotIcon size={28} /></ToolButton>
          </DotsSlot>
        </ToolbarTools>
      </Toolbar>
      <PageFrame>
        <TodoApp />
      </PageFrame>
      <Taskbar>
        <Spacer $grow={311} />
        <AppRow>
          <AppButton aria-label="Start"><WindowsIcon /></AppButton>
          <SearchBox>
            <SearchIcon />
            <SearchInput placeholder="Search" aria-label="Search" />
            <HatIcon />
          </SearchBox>
          {apps.map((a) => (
            <AppButton key={a.name} aria-label={a.name} $state={a.state}>{a.icon}</AppButton>
          ))}
        </AppRow>
        <Spacer $grow={80} />
        <Tray>
          <TrayButton aria-label="Show hidden icons"><ChevronUpIcon /></TrayButton>
          <TrayButton aria-label="OneDrive"><CloudIcon /></TrayButton>
          <TrayButton aria-label="Touch keyboard"><KeyboardIcon /></TrayButton>
          <TrayGroup>
            <TrayButton aria-label="Network"><WifiIcon /></TrayButton>
            <TrayButton aria-label="Volume"><SpeakerIcon /></TrayButton>
            <TrayButton aria-label="Battery"><BatteryIcon /></TrayButton>
          </TrayGroup>
          <Clock>7:26 PM<br />4/16/2025</Clock>
        </Tray>
      </Taskbar>
    </Screen>
  );
}
